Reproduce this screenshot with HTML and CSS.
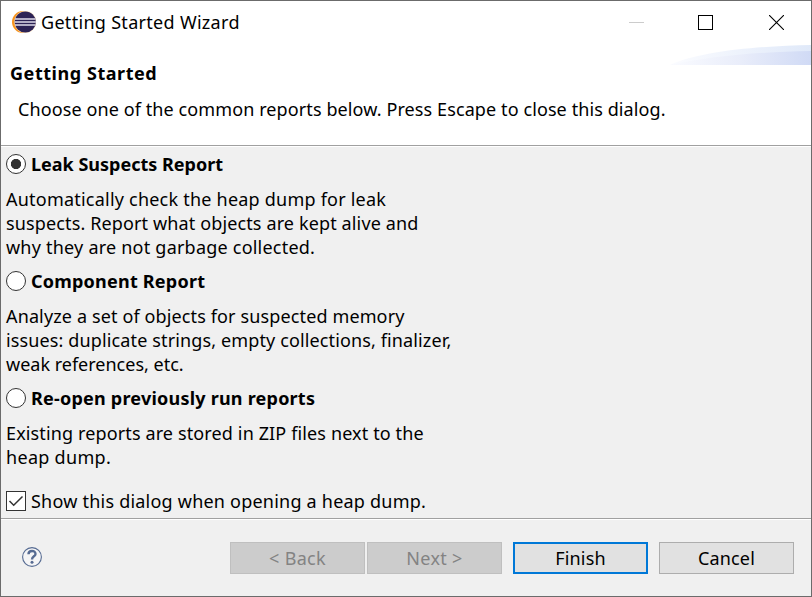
FILE: index.html
```html
<!DOCTYPE html>
<html lang="en">
<head>
<meta charset="utf-8">
<title>Getting Started Wizard</title>
<link rel="stylesheet" href="styles.css">
</head>
<body>
<div class="window">
  <header class="titlebar">
    <svg class="logo" width="24" height="22" viewBox="0 0 24 22">
      <circle cx="11" cy="11" r="11" fill="#f7941e"/>
      <circle cx="13.3" cy="11" r="11" fill="#fbe3c4"/>
      <circle cx="13.3" cy="11" r="10.6" fill="#2c2255"/>
      <path d="M3 8h20.5M2.7 11h21.2M3 14h20.5" stroke="#dedbea" stroke-width="1.7"/>
    </svg>
    <span class="window-title">Getting Started Wizard</span>
    <div class="controls">
      <svg width="15" height="15"><path d="M0 7.5h15" stroke="#ccc"/></svg>
      <svg class="maximize" width="15" height="15"><rect x=".5" y=".5" width="14" height="14" fill="none" stroke="#000"/></svg>
      <svg width="15" height="15"><path d="M0 0l15 15M15 0L0 15" stroke="#000" stroke-width="1.1"/></svg>
    </div>
  </header>
  <section class="banner">
    <svg class="swoosh" width="141" height="20" viewBox="0 0 141 20">
      <defs>
        <linearGradient id="pale"><stop offset="0" stop-color="#fbfcff"/><stop offset="1" stop-color="#e0e9f9"/></linearGradient>
        <linearGradient id="blue"><stop offset="0" stop-color="#fafbff"/><stop offset=".5" stop-color="#e9edfa"/><stop offset="1" stop-color="#d0daf5"/></linearGradient>
      </defs>
      <path d="M0 20C30 6 90 1 141 0V20Z" fill="url(#pale)"/>
      <path d="M0 20C40 11 90 7 141 6V20Z" fill="url(#blue)"/>
    </svg>
    <h1>Getting Started</h1>
    <p>Choose one of the common reports below. Press Escape to close this dialog.</p>
  </section>
  <main class="content">
    <div class="option">
      <div class="choice"><i class="radio on"></i><b class="normal">Leak Suspects Report</b></div>
      <p><span class="loose">Automatically check the heap dump for leak</span><br>suspects. Report what objects are kept alive and<br><span class="loose">why they are not garbage collected.</span></p>
    </div>
    <div class="option">
      <div class="choice"><i class="radio"></i><b class="loose">Component Report</b></div>
      <p>Analyze a set of objects for suspected memory<br>issues: duplicate strings, empty collections, finalizer,<br><span class="normal">weak references, etc.</span></p>
    </div>
    <div class="option">
      <div class="choice"><i class="radio"></i><b class="loose">Re-open previously run reports</b></div>
      <p>Existing reports are stored in ZIP files next to the<br><span class="looser">heap dump.</span></p>
    </div>
    <div class="choice show">
      <svg width="20" height="20"><rect x=".5" y=".5" width="19" height="19" fill="#fff" stroke="#333"/><path d="M3.5 10l4.2 4.3L16.5 5.5" fill="none" stroke="#333" stroke-width="1.5"/></svg>
      <span class="loose">Show this dialog when opening a heap dump.</span>
    </div>
  </main>
  <footer class="actions">
    <svg class="help" width="20" height="20" viewBox="0 0 20 20">
      <circle cx="10" cy="10" r="9.4" fill="#f5f5f6" stroke="#566b92" stroke-width="1.1"/>
      <path d="M6.5 7.3C6.5 2.9 13.5 2.9 13.5 6.9C13.5 9.4 10 9.2 10 12.4" fill="none" stroke="#566b92" stroke-width="2.4"/>
      <circle cx="10" cy="15.3" r="1.5" fill="#566b92"/>
    </svg>
    <button class="back" disabled>&lt; Back</button>
    <button class="next" disabled>Next &gt;</button>
    <button class="finish">Finish</button>
    <button class="cancel">Cancel</button>
  </footer>
</div>
</body>
</html>
```
FILE: styles.css
```css
* { box-sizing: border-box; }
body { margin: 0; }
p, h1 { margin: 0; }
svg { display: block; flex: none; }
.window {
  width: 812px;
  height: 597px;
  border: 1px solid #6b6b6b;
  background: #f0f0f0;
  color: #000;
  font: 18px/24px "Noto Sans", "Open Sans", sans-serif;
  letter-spacing: 0.13px;
  white-space: nowrap;
  display: flex;
  flex-direction: column;
}
.normal { letter-spacing: 0; }
.loose { letter-spacing: 0.22px; }
.looser { letter-spacing: 0.3px; }
.titlebar {
  height: 44px;
  padding: 0 27px 2px 11px;
  display: flex;
  align-items: center;
  background: #fff;
}
.window-title { margin-left: 5px; letter-spacing: 0.3px; }
.controls { margin-left: auto; display: flex; gap: 54px; }
.maximize { margin-right: 2px; }
.banner {
  position: relative;
  height: 102px;
  padding: 16px 0 0 9px;
  background: #fff;
  border-bottom: 1px solid #fff;
  box-shadow: inset 0 -1px #a0a0a0;
}
.swoosh { position: absolute; right: 0; top: 0; }
.banner h1 { font-size: 18px; line-height: 24px; font-weight: 700; letter-spacing: 0.55px; }
.banner p { margin: 12px 0 0 8px; letter-spacing: 0.1px; }
.content {
  height: 371px;
  padding: 5px 0 0 5px;
}
.option { margin-bottom: 10px; }
.option p { margin-top: 11px; }
.choice { display: flex; height: 24px; align-items: center; gap: 5px; }
.radio {
  width: 20px;
  height: 20px;
  border: 1px solid #333;
  border-radius: 50%;
  background: #fff;
}
.radio.on { background: radial-gradient(circle, #333 4.8px, #fff 5.4px); }
.show { margin-top: 20px; }
.actions {
  flex: 1;
  border-top: 1px solid #a0a0a0;
  box-shadow: inset 0 1px #fff;
  padding: 23px 17px 0 21px;
  display: flex;
}
.help { margin: 5px auto 0 0; }
.actions button {
  width: 135px;
  height: 32px;
  padding: 0;
  border: 1px solid #adadad;
  background: #e1e1e1;
  color: #000;
  font: inherit;
  letter-spacing: 0.15px;
}
.actions button:disabled { background: #ccc; border-color: #bfbfbf; color: #838383; letter-spacing: 0.3px; }
.actions .next { margin-left: 2px; }
.actions .finish { margin-left: 11px; border: 2px solid #0078d7; }
.actions .cancel { margin-left: 11px; }
```
